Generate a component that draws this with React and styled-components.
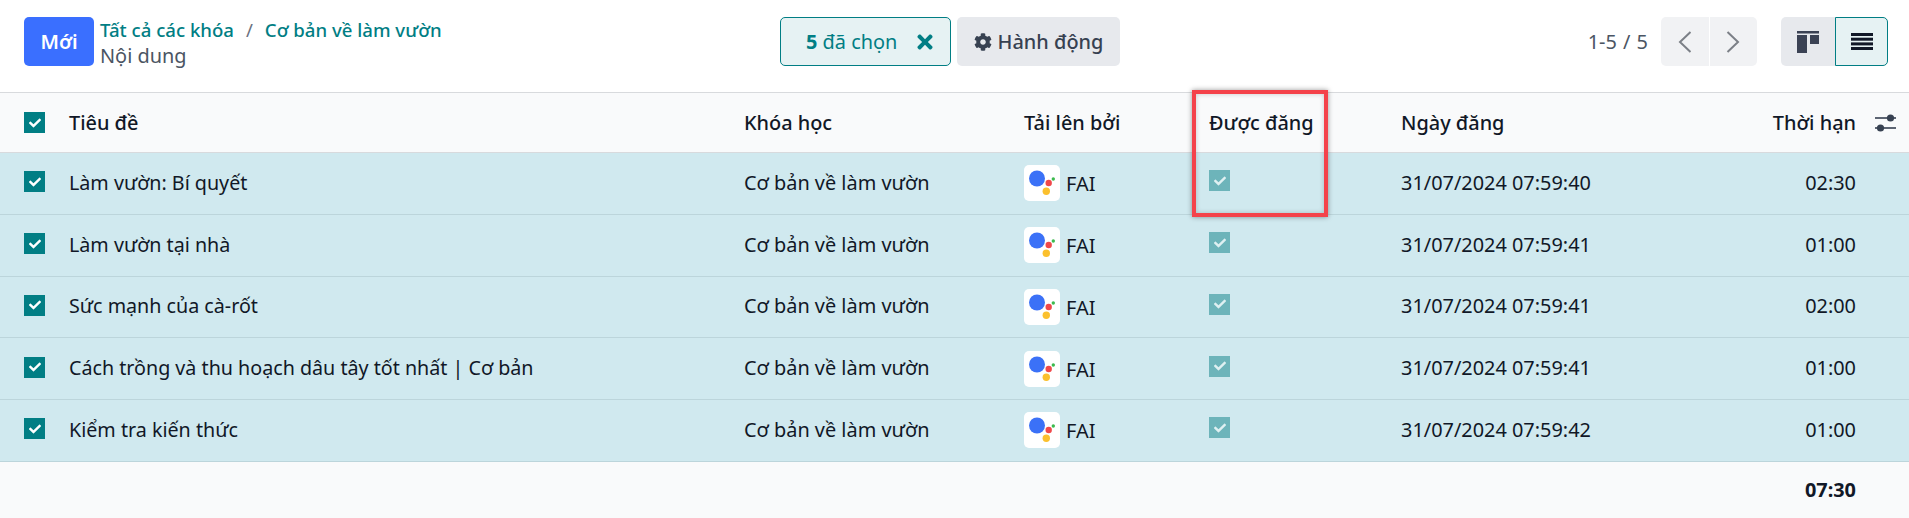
import React from "react";
import styled, { createGlobalStyle } from "styled-components";
import { FaCog, FaTimes, FaCheck } from "react-icons/fa";

const Global = createGlobalStyle`
  html, body { margin: 0; padding: 0; background: #fff; }
  body { font-family: "Noto Sans", "Open Sans", sans-serif; font-size: 19.9px; color: #111827; }
  * { box-sizing: border-box; }
`;

const Page = styled.div`
  position: relative;
  width: 1909px;
  height: 518px;
  overflow: hidden;
  background: #f9fafb;
`;

const Toolbar = styled.header`
  display: grid;
  grid-template-columns: 756px 1fr auto auto;
  align-items: center;
  height: 93px;
  padding: 0 21px 9px 24px;
  background: #fff;
  border-bottom: 1px solid #d8dadd;
`;

const LeftGroup = styled.div`
  display: flex;
  align-items: center;
  gap: 6px;
`;

const PrimaryButton = styled.button`
  width: 70px;
  height: 49px;
  border: 0;
  border-radius: 5px;
  background: #3a6fff;
  color: #fff;
  font: 600 19.9px "Noto Sans", sans-serif;
`;

const Breadcrumbs = styled.div`
  display: flex;
  flex-direction: column;
  line-height: 26px;
  margin-top: 3px;
`;

const Trail = styled.div`
  display: flex;
  gap: 12px;
  font-size: 18.6px;
  font-weight: 500;
  color: #017e84;
`;

const Sep = styled.span`
  color: #6b7280;
  font-weight: 400;
`;

const Current = styled.div`
  color: #4b5563;
`;

const CenterGroup = styled.div`
  display: flex;
  gap: 6px;
`;

const SelectedChip = styled.div`
  display: flex;
  align-items: center;
  width: 171px;
  height: 49px;
  padding: 0 14px 0 25px;
  border: 1px solid #017e84;
  border-radius: 5px;
  background: #e6f2f3;
  color: #017e84;
  justify-content: space-between;
`;

const Strong = styled.b`
  font-weight: 700;
`;

const ActionButton = styled.button`
  display: flex;
  align-items: center;
  justify-content: center;
  gap: 6px;
  width: 163px;
  height: 49px;
  border: 0;
  border-radius: 5px;
  background: #e7e9ed;
  color: #374151;
  font: 500 19.9px "Noto Sans", sans-serif;
`;

const Pager = styled.div`
  display: flex;
  align-items: center;
  gap: 13px;
  margin-right: 24px;
`;

const PagerText = styled.span`
  color: #4b5563;
  word-spacing: 1px;
`;

const PagerButtons = styled.div`
  display: flex;
  gap: 1px;
  border-radius: 5px;
  overflow: hidden;
`;

const PagerButton = styled.div`
  display: flex;
  align-items: center;
  justify-content: center;
  width: 47.5px;
  height: 49px;
  background: #f1f2f4;
`;

const ViewSwitch = styled.div`
  display: flex;
`;

const ViewButton = styled.div`
  display: flex;
  align-items: center;
  justify-content: center;
  width: ${(p) => (p.$active ? "53px" : "54px")};
  height: 49px;
  background: ${(p) => (p.$active ? "#e6f2f3" : "#e7e9ed")};
  border: ${(p) => (p.$active ? "1px solid #017e84" : "0")};
  border-radius: ${(p) => (p.$active ? "0 5px 5px 0" : "5px 0 0 5px")};
`;

const columns = "69px 675px 280px 185px 192px 200px 255px 53px";

const HeaderRow = styled.div`
  display: grid;
  grid-template-columns: ${columns};
  align-items: center;
  height: 60px;
  background: #f9fafb;
  border-bottom: 1px solid #d8dadd;
  font-weight: 500;
`;

const DataRow = styled.div`
  display: grid;
  grid-template-columns: ${columns};
  align-items: center;
  height: 61.75px;
  padding-bottom: 2px;
  background: #d0e9ef;
  border-bottom: 1px solid #bcd5db;
`;

const FooterRow = styled.div`
  display: grid;
  grid-template-columns: ${columns};
  align-items: center;
  height: 55px;
  font-weight: 700;
`;

const CheckCell = styled.div`
  padding-left: 24px;
  display: flex;
`;

const RowCheckCell = styled(CheckCell)`
  margin-top: -1px;
`;

const TitleCell = styled.div`
  font-size: 19.7px;
`;

const NumCell = styled.div`
  text-align: right;
  grid-column: ${(p) => p.$col || "auto"};
`;

const Box = styled.span`
  display: flex;
  align-items: center;
  justify-content: center;
  width: 21px;
  height: 21px;
  background: ${(p) => (p.$muted ? "#6db4ba" : "#017e84")};
  color: ${(p) => (p.$muted ? "#dff0f2" : "#fff")};
  margin-top: ${(p) => (p.$muted ? "-3px" : "0")};
`;

const Uploader = styled.div`
  display: flex;
  align-items: center;
  gap: 6px;
  margin-top: 2px;
`;

const AvatarBox = styled.span`
  display: block;
  width: 36px;
  height: 36px;
  border-radius: 5px;
  background: #fff;
`;

const UploaderName = styled.span`
  padding-top: 1px;
`;

const AdjustCell = styled.div`
  display: flex;
  justify-content: flex-end;
  padding-right: 13px;
`;

const Highlight = styled.div`
  position: absolute;
  left: 1192px;
  top: 90px;
  width: 136px;
  height: 127px;
  border: 4px solid #f4424a;
  box-shadow: 0 0 5px rgba(0, 0, 0, 0.4), inset 0 0 5px rgba(0, 0, 0, 0.2);
`;

const Chevron = ({ dir }) => (
  <svg width="14" height="22" viewBox="0 0 14 22" fill="none" stroke="#7c8087" strokeWidth="2">
    <path d={dir === "left" ? "M12.5 1 2 11l10.5 10" : "M1.5 1 12 11 1.5 21"} />
  </svg>
);

const KanbanIcon = () => (
  <svg width="22" height="22" viewBox="0 0 22 22" fill="#3b4254">
    <rect x="0" y="0" width="22" height="2.5" />
    <rect x="0" y="4" width="10" height="18" />
    <rect x="13" y="4" width="9" height="9" />
  </svg>
);

const ListIcon = () => (
  <svg width="22" height="17" viewBox="0 0 22 17" fill="#111827">
    <rect y="0" width="22" height="3" />
    <rect y="4.7" width="22" height="3" />
    <rect y="9.4" width="22" height="3" />
    <rect y="14" width="22" height="3" />
  </svg>
);

const AdjustIcon = () => (
  <svg width="21" height="18" viewBox="0 0 21 18" fill="#374151">
    <rect y="3.2" width="21" height="1.6" />
    <rect y="13.2" width="21" height="1.6" />
    <circle cx="15.5" cy="4" r="3.6" />
    <circle cx="5.5" cy="14" r="3.6" />
  </svg>
);

const AssistantLogo = () => (
  <AvatarBox>
    <svg width="36" height="36" viewBox="0 0 36 36">
      <circle cx="13" cy="13.5" r="8" fill="#3b71f7" />
      <circle cx="24.7" cy="18" r="3.2" fill="#f0484a" />
      <circle cx="29.3" cy="14" r="1.7" fill="#3dba4e" />
      <circle cx="22.3" cy="26.3" r="3.7" fill="#fbc02d" />
    </svg>
  </AvatarBox>
);

const Check = ({ muted }) => (
  <Box $muted={muted}>
    <FaCheck size={12} />
  </Box>
);

const rows = [
  { title: "Làm vườn: Bí quyết", date: "31/07/2024 07:59:40", time: "02:30" },
  { title: "Làm vườn tại nhà", date: "31/07/2024 07:59:41", time: "01:00" },
  { title: "Sức mạnh của cà-rốt", date: "31/07/2024 07:59:41", time: "02:00" },
  { title: "Cách trồng và thu hoạch dâu tây tốt nhất | Cơ bản", date: "31/07/2024 07:59:41", time: "01:00" },
  { title: "Kiểm tra kiến thức", date: "31/07/2024 07:59:42", time: "01:00" },
];

export default function App() {
  return (
    <Page>
      <Global />
      <Toolbar>
        <LeftGroup>
          <PrimaryButton>Mới</PrimaryButton>
          <Breadcrumbs>
            <Trail>
              <span>Tất cả các khóa</span>
              <Sep>/</Sep>
              <span>Cơ bản về làm vườn</span>
            </Trail>
            <Current>Nội dung</Current>
          </Breadcrumbs>
        </LeftGroup>
        <CenterGroup>
          <SelectedChip>
            <span>
              <Strong>5</Strong> đã chọn
            </span>
            <FaTimes size={22} />
          </SelectedChip>
          <ActionButton>
            <FaCog size={18} />
            Hành động
          </ActionButton>
        </CenterGroup>
        <Pager>
          <PagerText>1-5 / 5</PagerText>
          <PagerButtons>
            <PagerButton>
              <Chevron dir="left" />
            </PagerButton>
            <PagerButton>
              <Chevron dir="right" />
            </PagerButton>
          </PagerButtons>
        </Pager>
        <ViewSwitch>
          <ViewButton>
            <KanbanIcon />
          </ViewButton>
          <ViewButton $active>
            <ListIcon />
          </ViewButton>
        </ViewSwitch>
      </Toolbar>

      <HeaderRow>
        <CheckCell>
          <Check />
        </CheckCell>
        <div>Tiêu đề</div>
        <div>Khóa học</div>
        <div>Tải lên bởi</div>
        <div>Được đăng</div>
        <div>Ngày đăng</div>
        <NumCell>Thời hạn</NumCell>
        <AdjustCell>
          <AdjustIcon />
        </AdjustCell>
      </HeaderRow>

      {rows.map((r) => (
        <DataRow key={r.title}>
          <RowCheckCell>
            <Check />
          </RowCheckCell>
          <TitleCell>{r.title}</TitleCell>
          <div>Cơ bản về làm vườn</div>
          <Uploader>
            <AssistantLogo />
            <UploaderName>FAI</UploaderName>
          </Uploader>
          <div>
            <Check muted />
          </div>
          <div>{r.date}</div>
          <NumCell>{r.time}</NumCell>
        </DataRow>
      ))}

      <FooterRow>
        <NumCell $col="7 / 8">07:30</NumCell>
      </FooterRow>

      <Highlight />
    </Page>
  );
}
